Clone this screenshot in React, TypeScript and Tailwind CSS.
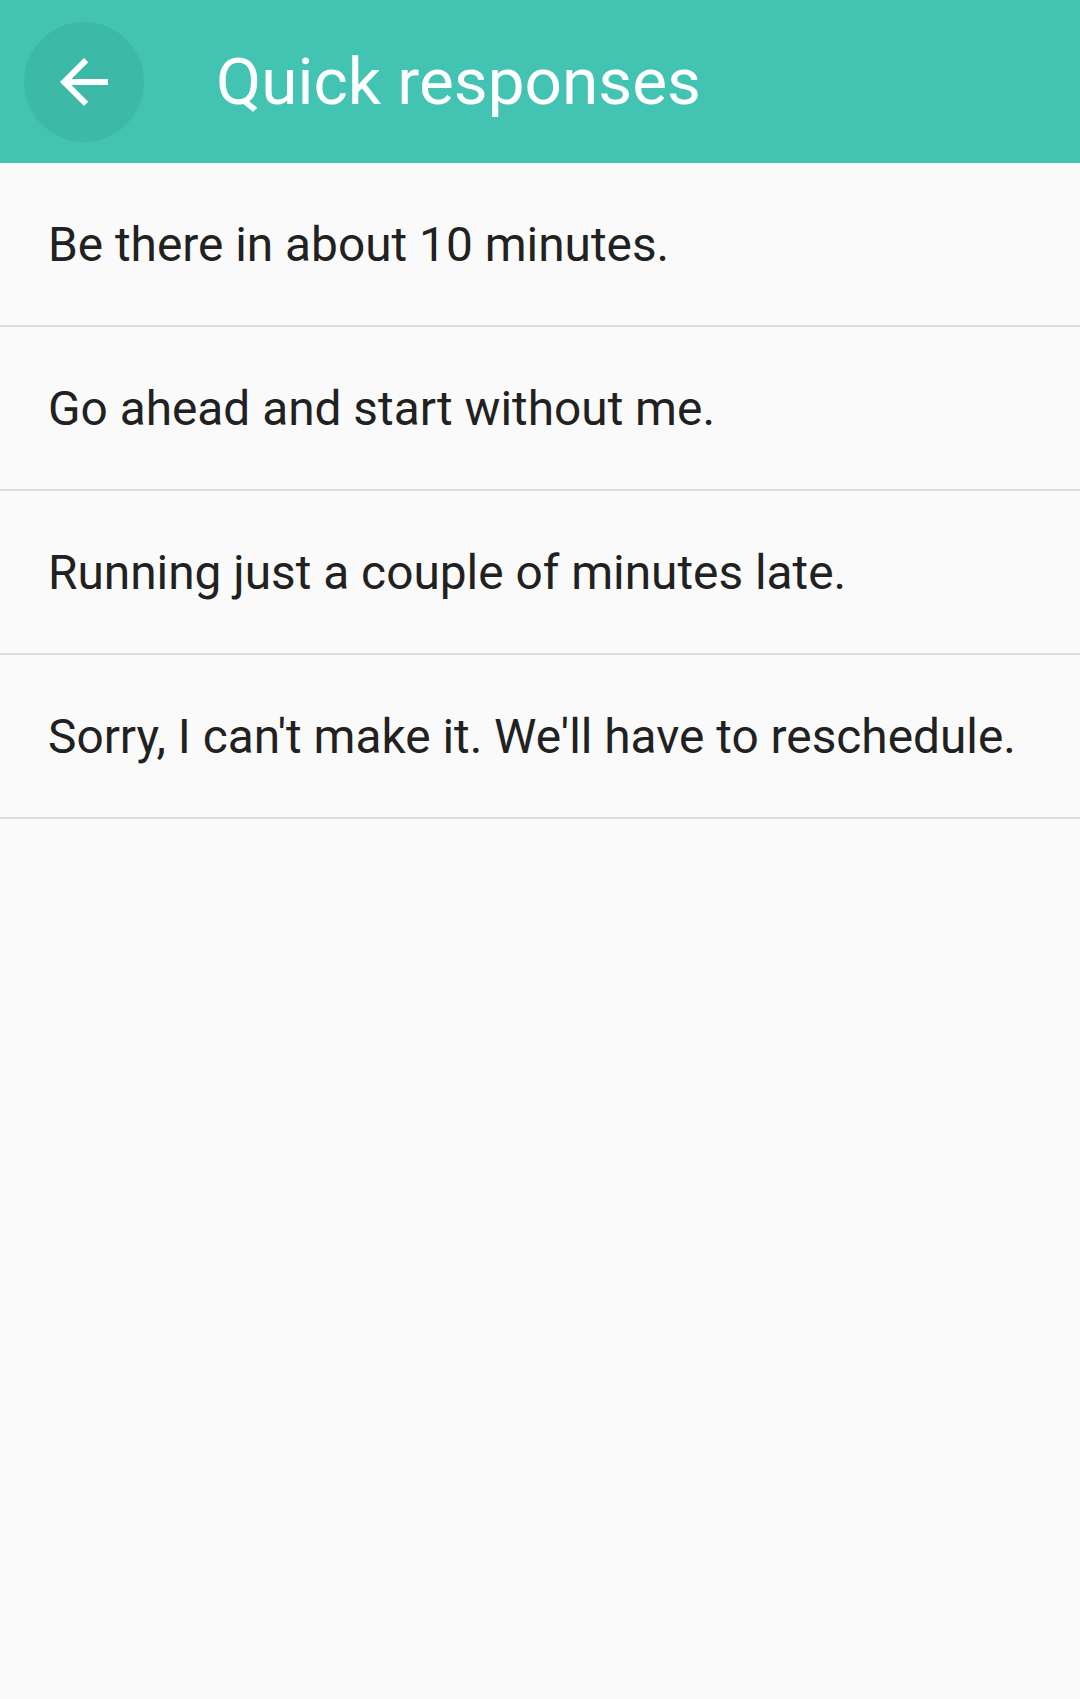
const responses = [
  'Be there in about 10 minutes.',
  'Go ahead and start without me.',
  'Running just a couple of minutes late.',
  "Sorry, I can't make it. We'll have to reschedule.",
]

function BackArrow() {
  return (
    <svg viewBox="0 0 24 24" className="h-[72px] w-[72px] fill-white">
      <path d="M20 11H7.83l5.59-5.59L12 4l-8 8 8 8 1.41-1.41L7.83 13H20v-2z" />
    </svg>
  )
}

export default function App() {
  return (
    <div className="min-h-[1699px] w-[1080px] bg-[#fafafa] font-['Roboto',sans-serif]">
      <header className="flex h-[163px] items-center bg-[#43c4b2] pl-[24px]">
        <button className="flex h-[120px] w-[120px] items-center justify-center rounded-full bg-[#3db9a7]">
          <BackArrow />
        </button>
        <h1 className="ml-[72px] text-[65.7px] font-normal leading-none text-white">Quick responses</h1>
      </header>

      <ul>
        {responses.map((text) => (
          <li
            key={text}
            className="flex h-[164px] items-center border-b-2 border-[#dddddd] pl-[48px] pt-[4px] text-[47.8px] text-[#212121]"
          >
            {text}
          </li>
        ))}
      </ul>
    </div>
  )
}
